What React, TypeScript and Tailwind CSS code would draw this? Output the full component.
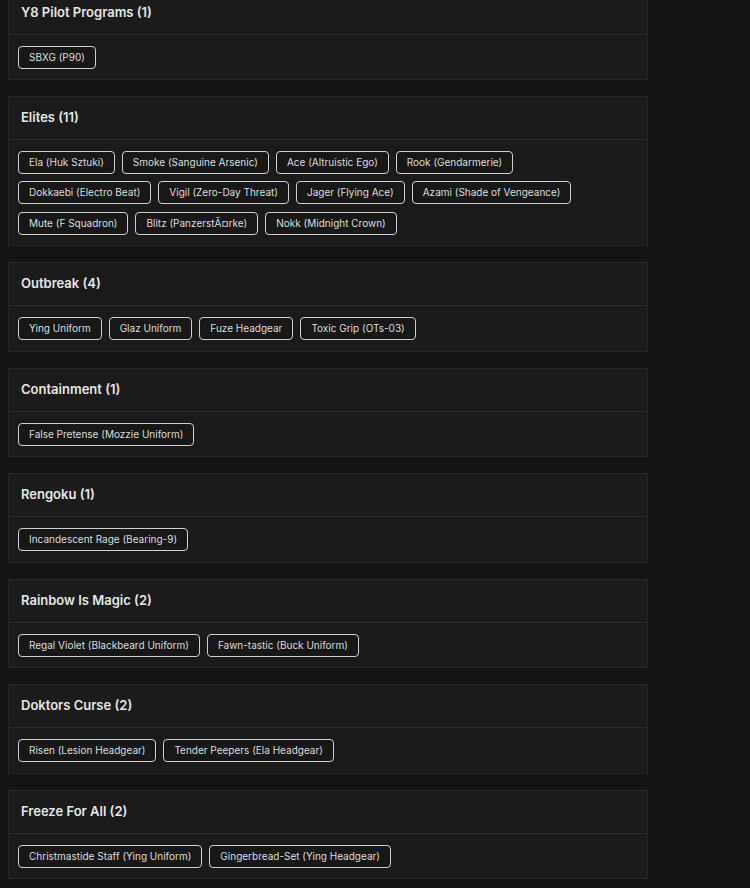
import React from 'react';

const groups: { title: string; items: string[] }[] = [
  { title: 'Y8 Pilot Programs (1)', items: ['SBXG (P90)'] },
  {
    title: 'Elites (11)',
    items: [
      'Ela (Huk Sztuki)',
      'Smoke (Sanguine Arsenic)',
      'Ace (Altruistic Ego)',
      'Rook (Gendarmerie)',
      'Dokkaebi (Electro Beat)',
      'Vigil (Zero-Day Threat)',
      'Jager (Flying Ace)',
      'Azami (Shade of Vengeance)',
      'Mute (F Squadron)',
      'Blitz (PanzerstÃ¤rke)',
      'Nokk (Midnight Crown)',
    ],
  },
  { title: 'Outbreak (4)', items: ['Ying Uniform', 'Glaz Uniform', 'Fuze Headgear', 'Toxic Grip (OTs-03)'] },
  { title: 'Containment (1)', items: ['False Pretense (Mozzie Uniform)'] },
  { title: 'Rengoku (1)', items: ['Incandescent Rage (Bearing-9)'] },
  { title: 'Rainbow Is Magic (2)', items: ['Regal Violet (Blackbeard Uniform)', 'Fawn-tastic (Buck Uniform)'] },
  { title: 'Doktors Curse (2)', items: ['Risen (Lesion Headgear)', 'Tender Peepers (Ela Headgear)'] },
  { title: 'Freeze For All (2)', items: ['Christmastide Staff (Ying Uniform)', 'Gingerbread-Set (Ying Headgear)'] },
];

export default function App() {
  return (
    <div className="min-h-[888px] bg-[#131313] overflow-hidden font-['Inter',sans-serif]">
      <div className="w-[640px] ml-2 -mt-[9.5px]">
        {groups.map((g) => (
          <section key={g.title} className="mb-4 border border-[#262626] bg-[#1b1b1b]">
            {/* Header */}
            <div className="h-[43px] flex items-center px-3 border-b border-[#2b2b2b]">
              <h3 className="text-[13px] font-semibold text-[#e6e6e6]">{g.title}</h3>
            </div>
            {/* Skins */}
            <div className="flex flex-wrap gap-x-[7px] gap-y-[7.25px] pt-[11px] pb-[10.5px] px-[9px]">
              {g.items.map((it) => (
                <span
                  key={it}
                  className="h-[23px] flex items-center px-[10px] rounded-[4px] border border-[#cfcfcf] bg-[#181818] text-[10px] text-[#dcdcdc] whitespace-nowrap"
                >
                  {it}
                </span>
              ))}
            </div>
          </section>
        ))}
      </div>
    </div>
  );
}
